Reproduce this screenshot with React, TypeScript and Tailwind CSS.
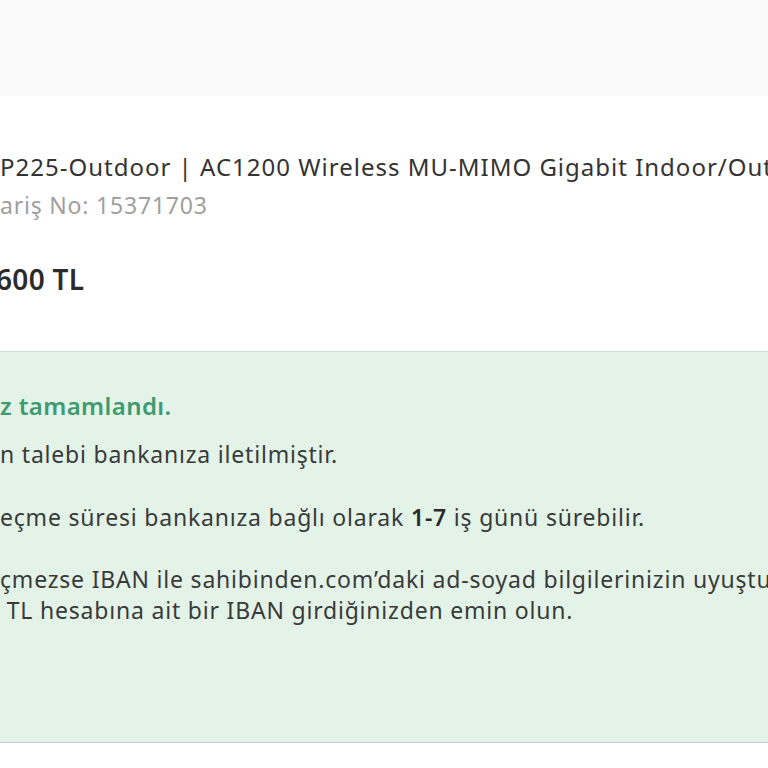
const font = { fontFamily: "'Noto Sans', Roboto, sans-serif" };

type ClippedLineProps = {
  hidden: string;
  children: React.ReactNode;
  className?: string;
  pull?: string;
};

// the screenshot is cropped on the left, so the start of every line sits off-screen
function ClippedLine({ hidden, children, className = "", pull = "-ml-[300px]" }: ClippedLineProps) {
  return (
    <div className={`whitespace-nowrap ${className}`}>
      <span className={`${pull} inline-block w-[300px] text-right`}>{hidden}</span>
      {children}
    </div>
  );
}

export default function App() {
  return (
    <div className="min-h-[768px] w-[768px] overflow-hidden bg-white" style={font}>
      <div className="h-[96px] bg-[#fafafa]" />

      <section className="pt-[55px] pb-[54px]">
        <ClippedLine hidden="TP-Link EA" className="text-[24px] leading-[32px] tracking-[1px] text-[#333333]">
          P225-Outdoor | AC1200 Wireless MU-MIMO Gigabit Indoor/Outdoor Access Point
        </ClippedLine>
        <ClippedLine hidden="Sip" className="mt-[8px] text-[23px] leading-[28px] tracking-[0.8px] text-[#a0a0a0]">
          ariş No: 15371703
        </ClippedLine>
        <ClippedLine
          hidden="1."
          pull="-ml-[304px]"
          className="mt-[42px] text-[28px] leading-[36px] tracking-[0.3px] font-semibold text-[#2b2b2b]"
        >
          600 TL
        </ClippedLine>
      </section>

      <section className="border-y border-t-[#c5e4cf] border-b-[#bfcfc5] bg-[#e3f3e8] pt-[38px] pb-[116px] text-[23px] leading-[31px] tracking-[0.8px] text-[#3a3a3a]">
        <ClippedLine hidden="İade talebini" className="text-[24px] leading-[32px] tracking-[0.4px] font-semibold text-[#3f9a70]">
          z tamamlandı.
        </ClippedLine>
        <ClippedLine hidden="İade işlemini" className="mt-[17px]">
          n talebi bankanıza iletilmiştir.
        </ClippedLine>
        <ClippedLine hidden="Paranın hesabınıza g" className="mt-[32px]">
          eçme süresi bankanıza bağlı olarak <b className="font-semibold text-[#2b2b2b]">1-7</b> iş günü sürebilir.
        </ClippedLine>
        <ClippedLine hidden="Para hesabınıza ge" className="mt-[31px]">
          çmezse IBAN ile sahibinden.com’daki ad-soyad bilgilerinizin uyuştuğundan ve
        </ClippedLine>
        <ClippedLine hidden="kendi adınız">
          {" "}TL hesabına ait bir IBAN girdiğinizden emin olun.
        </ClippedLine>
      </section>
    </div>
  );
}
